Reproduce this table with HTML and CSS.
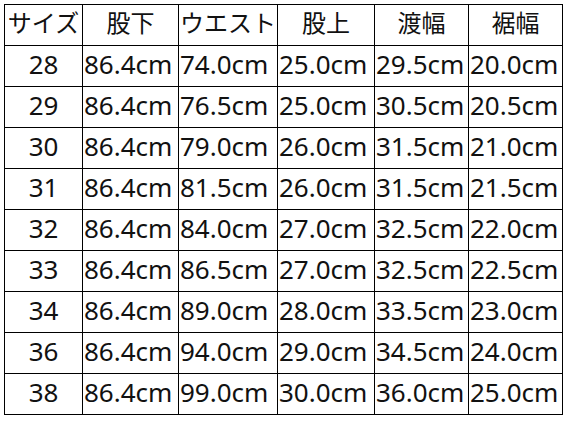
FILE: index.html
```html
<!DOCTYPE html>
<html lang="ja">
<head>
<meta charset="utf-8">
<link rel="stylesheet" href="styles.css">
</head>
<body>
<table class="size-table">
  <colgroup>
    <col class="c1"><col class="c2"><col class="c3"><col class="c4"><col class="c5"><col class="c6">
  </colgroup>
  <thead>
    <tr><th>サイズ</th><th>股下</th><th>ウエスト</th><th>股上</th><th>渡幅</th><th>裾幅</th></tr>
  </thead>
  <tbody>
    <tr><td class="size">28</td><td>86.4cm</td><td>74.0cm</td><td>25.0cm</td><td>29.5cm</td><td>20.0cm</td></tr>
    <tr><td class="size">29</td><td>86.4cm</td><td>76.5cm</td><td>25.0cm</td><td>30.5cm</td><td>20.5cm</td></tr>
    <tr><td class="size">30</td><td>86.4cm</td><td>79.0cm</td><td>26.0cm</td><td>31.5cm</td><td>21.0cm</td></tr>
    <tr><td class="size">31</td><td>86.4cm</td><td>81.5cm</td><td>26.0cm</td><td>31.5cm</td><td>21.5cm</td></tr>
    <tr><td class="size">32</td><td>86.4cm</td><td>84.0cm</td><td>27.0cm</td><td>32.5cm</td><td>22.0cm</td></tr>
    <tr><td class="size">33</td><td>86.4cm</td><td>86.5cm</td><td>27.0cm</td><td>32.5cm</td><td>22.5cm</td></tr>
    <tr><td class="size">34</td><td>86.4cm</td><td>89.0cm</td><td>28.0cm</td><td>33.5cm</td><td>23.0cm</td></tr>
    <tr><td class="size">36</td><td>86.4cm</td><td>94.0cm</td><td>29.0cm</td><td>34.5cm</td><td>24.0cm</td></tr>
    <tr><td class="size">38</td><td>86.4cm</td><td>99.0cm</td><td>30.0cm</td><td>36.0cm</td><td>25.0cm</td></tr>
  </tbody>
</table>
</body>
</html>
```
FILE: styles.css
```css
html, body {
  margin: 0;
  background: #ffffff;
}
body {
  padding: 4px;
  font-family: "Noto Sans", "Noto Sans CJK JP", sans-serif;
  color: #111111;
}
.size-table {
  border-collapse: collapse;
  table-layout: fixed;
  width: 558px;
}
.c1 { width: 78px; }
.c2 { width: 96px; }
.c3 { width: 99px; }
.c4 { width: 97px; }
.c5 { width: 94px; }
.c6 { width: 94px; }
.size-table th,
.size-table td {
  border: 1px solid #000000;
  height: 40px;
  box-sizing: border-box;
  padding: 0;
  font-weight: normal;
  text-align: center;
  white-space: nowrap;
  overflow: hidden;
}
.size-table th {
  font-family: "Noto Sans CJK JP", sans-serif;
  font-size: 24px;
  line-height: 34px;
  padding-bottom: 6px;
}
.size-table td {
  font-size: 26px;
  line-height: 36px;
  padding-bottom: 4px;
  padding-left: 1px;
  text-align: left;
}
.size-table td.size {
  padding-left: 0;
  text-align: center;
}
```
